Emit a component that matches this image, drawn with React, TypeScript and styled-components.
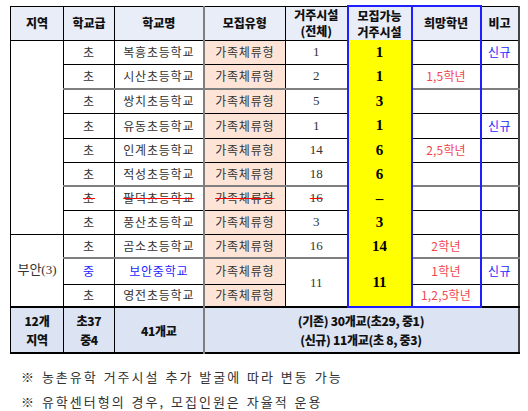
import styled, { createGlobalStyle, css } from "styled-components";

const GlobalStyle = createGlobalStyle`
  html, body {
    margin: 0;
    background: #fff;
  }
  body {
    font-family: "Noto Sans CJK KR", sans-serif;
    color: #333;
  }
`;

const BLUE = "#1e1eff";
const RED = "#f2464e";
const GREY_LINE = "#7f7f7f";

const Page = styled.div`
  width: 528px;
  padding: 5px 0 0 10px;
  box-sizing: border-box;
`;

const Table = styled.table`
  border-collapse: collapse;
  table-layout: fixed;
  width: 508px;
  border-top: 1px solid #000;
  border-left: 1px solid #000;
  border-right: 2px solid #444;
  border-bottom: 2px solid #000;
`;

const Row = styled.tr<{ $h: number; $sep?: "grey" | "black" }>`
  height: ${(p) => p.$h}px;
  ${(p) => p.$sep === "grey" && css`border-bottom: 2px solid ${GREY_LINE};`}
  ${(p) => p.$sep === "black" && css`border-bottom: 2px solid #000;`}
`;

const Th = styled.th<{ $wish?: boolean; $avail?: boolean; $type?: boolean }>`
  background: #e9edf8;
  border: 1px solid #000;
  font-family: "Noto Sans CJK KR", sans-serif;
  font-weight: 900;
  font-size: 12px;
  line-height: 16px;
  color: #111;
  padding: 0;
  text-align: center;
  vertical-align: middle;
  ${(p) => p.$type && css`border-left: 2px solid ${GREY_LINE};`}
  ${(p) =>
    p.$avail &&
    css`
      border-left: 2px solid ${BLUE};
      border-right: 2px solid ${BLUE};
      border-top: 2px solid ${BLUE};
      border-bottom-style: hidden;
    `}
  ${(p) =>
    p.$wish &&
    css`
      border-right: 2px solid ${BLUE};
      border-top: 2px solid ${BLUE};
    `}
`;

const HeadLine = styled.span`
  display: block;
  height: 16px;
`;

const Cell = styled.td<{ $ink?: "red" | "blue"; $strike?: boolean }>`
  border: 1px solid #000;
  padding: 0;
  text-align: center;
  vertical-align: middle;
  font-family: "Noto Sans CJK KR", sans-serif;
  font-size: 12px;
  letter-spacing: 0.8px;
  line-height: 14px;
  color: ${(p) => (p.$ink === "red" ? RED : p.$ink === "blue" ? BLUE : "#333")};
  ${(p) =>
    p.$strike &&
    css`
      text-decoration: line-through;
      text-decoration-color: #f00;
      text-decoration-thickness: 1px;
    `}
`;

const Region = styled(Cell)`
  font-family: "Liberation Serif", "Noto Sans CJK KR", serif;
  font-size: 13px;
  letter-spacing: 0;
`;

const TypeCell = styled(Cell)`
  background: #fde4d6;
  border-left: 2px solid ${GREY_LINE};
`;

const Count = styled(Cell)`
  font-family: "Liberation Serif", "Noto Sans CJK KR", serif;
  font-size: 13px;
  letter-spacing: 0;
`;

const Avail = styled.td<{ $last?: boolean }>`
  background: #ffff00;
  border-left: 2px solid ${BLUE};
  border-right: 2px solid ${BLUE};
  border-top-style: hidden;
  border-bottom-style: hidden;
  ${(p) => p.$last && css`border-bottom: 2px solid ${BLUE};`}
  padding: 0;
  text-align: center;
  vertical-align: middle;
  font-family: "Liberation Serif", "Noto Sans CJK KR", serif;
  font-weight: 700;
  font-size: 15px;
  color: #000;
`;

const Wish = styled(Cell)<{ $last?: boolean }>`
  color: ${RED};
  letter-spacing: 0.2px;
  border-right: 2px solid ${BLUE};
  ${(p) => p.$last && css`border-bottom: 2px solid ${BLUE};`}
`;

const Remark = styled(Cell)`
  color: ${BLUE};
  letter-spacing: 0.4px;
`;

const Sum = styled.td<{ $type?: boolean }>`
  background: #dce3f2;
  border: 1px solid #000;
  border-top: 2px solid #000;
  ${(p) => p.$type && css`border-left: 2px solid ${GREY_LINE};`}
  padding: 0;
  text-align: center;
  vertical-align: middle;
  font-family: "Noto Sans CJK KR", sans-serif;
  font-weight: 900;
  font-size: 12px;
  line-height: 19px;
  color: #111;
  letter-spacing: -0.3px;
`;

const Notes = styled.div`
  margin-top: 10px;
  padding-left: 11px;
  font-family: "Noto Sans CJK KR", sans-serif;
  font-size: 13px;
  line-height: 25px;
  letter-spacing: 2px;
  word-spacing: 1px;
  color: #333;
`;

type School = {
  level: string;
  name: string;
  total: string;
  avail: string;
  wish?: string;
  remark?: string;
  strike?: boolean;
  h: number;
  sep?: "grey";
};

const firstArea: School[] = [
  { level: "초", name: "복흥초등학교", total: "1", avail: "1", remark: "신규", h: 24 },
  { level: "초", name: "시산초등학교", total: "2", avail: "1", wish: "1,5학년", h: 25, sep: "grey" },
  { level: "초", name: "쌍치초등학교", total: "5", avail: "3", h: 24 },
  { level: "초", name: "유동초등학교", total: "1", avail: "1", remark: "신규", h: 25 },
  { level: "초", name: "인계초등학교", total: "14", avail: "6", wish: "2,5학년", h: 24 },
  { level: "초", name: "적성초등학교", total: "18", avail: "6", h: 24, sep: "grey" },
  { level: "초", name: "팔덕초등학교", total: "16", avail: "–", strike: true, h: 24 },
  { level: "초", name: "풍산초등학교", total: "3", avail: "3", h: 24 },
];

export default function App() {
  return (
    <Page>
      <GlobalStyle />
      <Table>
        <colgroup>
          <col style={{ width: 53 }} />
          <col style={{ width: 51 }} />
          <col style={{ width: 89 }} />
          <col style={{ width: 82 }} />
          <col style={{ width: 62 }} />
          <col style={{ width: 64 }} />
          <col style={{ width: 69 }} />
          <col style={{ width: 38 }} />
        </colgroup>
        <thead>
          <Row $h={34}>
            <Th>지역</Th>
            <Th>학교급</Th>
            <Th>학교명</Th>
            <Th $type>모집유형</Th>
            <Th>
              <HeadLine>거주시설</HeadLine>
              <HeadLine>(전체)</HeadLine>
            </Th>
            <Th $avail>
              <HeadLine>모집가능</HeadLine>
              <HeadLine>거주시설</HeadLine>
            </Th>
            <Th $wish>희망학년</Th>
            <Th>비고</Th>
          </Row>
        </thead>
        <tbody>
          {firstArea.map((s, i) => (
            <Row key={s.name} $h={s.h} $sep={s.sep}>
              {i === 0 && <Region rowSpan={firstArea.length} />}
              <Cell $strike={s.strike}>{s.level}</Cell>
              <Cell $strike={s.strike}>{s.name}</Cell>
              <TypeCell $strike={s.strike}>가족체류형</TypeCell>
              <Count $strike={s.strike}>{s.total}</Count>
              <Avail>{s.avail}</Avail>
              <Wish>{s.wish}</Wish>
              <Remark>{s.remark}</Remark>
            </Row>
          ))}
          <Row $h={24} $sep="grey">
            <Region rowSpan={3}>부안(3)</Region>
            <Cell>초</Cell>
            <Cell>곰소초등학교</Cell>
            <TypeCell>가족체류형</TypeCell>
            <Count>16</Count>
            <Avail>14</Avail>
            <Wish>2학년</Wish>
            <Remark />
          </Row>
          <Row $h={26}>
            <Cell $ink="blue">중</Cell>
            <Cell $ink="blue">보안중학교</Cell>
            <TypeCell>가족체류형</TypeCell>
            <Count rowSpan={2}>11</Count>
            <Avail rowSpan={2} $last>
              11
            </Avail>
            <Wish>1학년</Wish>
            <Remark>신규</Remark>
          </Row>
          <Row $h={23} $sep="black">
            <Cell>초</Cell>
            <Cell>영전초등학교</Cell>
            <TypeCell>가족체류형</TypeCell>
            <Wish $last>1,2,5학년</Wish>
            <Remark />
          </Row>
          <Row $h={46}>
            <Sum>
              12개
              <br />
              지역
            </Sum>
            <Sum>
              초37
              <br />
              중4
            </Sum>
            <Sum>41개교</Sum>
            <Sum $type colSpan={5}>
              (기존) 30개교(초29, 중1)
              <br />
              (신규) 11개교(초 8, 중3)
            </Sum>
          </Row>
        </tbody>
      </Table>
      <Notes>
        <div>※ 농촌유학 거주시설 추가 발굴에 따라 변동 가능</div>
        <div>※ 유학센터형의 경우, 모집인원은 자율적 운용</div>
      </Notes>
    </Page>
  );
}
